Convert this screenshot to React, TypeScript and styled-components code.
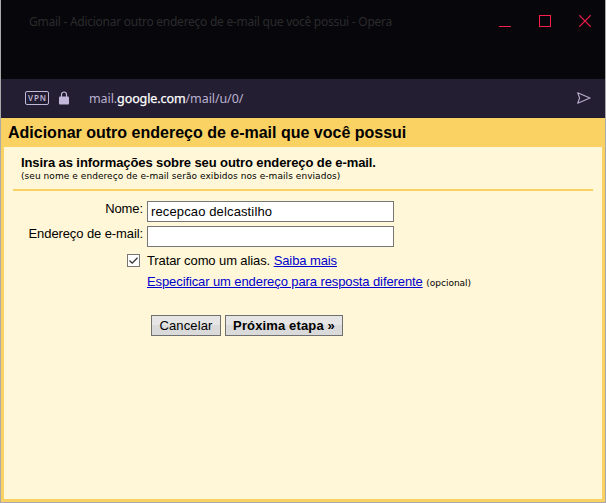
import React from 'react';
import styled, { createGlobalStyle } from 'styled-components';

const GlobalStyle = createGlobalStyle`
  * { box-sizing: border-box; }
  body { margin: 0; overflow: hidden; background: #a9a9a9; }
`;

const Window = styled.div`
  width: 606px;
  height: 503px;
  display: flex;
  flex-direction: column;
  border: solid #a9a9a9;
  border-width: 0 1px 1px;
  font-family: Arial, "Liberation Sans", sans-serif;
  color: #000;
  white-space: nowrap;
`;

const TitleBar = styled.header`
  height: 79px;
  flex: none;
  display: flex;
  justify-content: space-between;
  align-items: flex-start;
  padding: 14px 14px 0 28px;
  background: #07060b;
`;

const WindowTitle = styled.div`
  font: 12px/16px "Noto Sans", sans-serif;
  letter-spacing: -0.26px;
  color: #2b2b2b;
`;

const WindowControls = styled.div`
  display: flex;
  gap: 28px;
  padding-top: 1px;
`;

const AddressBar = styled.div`
  height: 39px;
  flex: none;
  display: flex;
  align-items: center;
  padding: 0 14px 0 24px;
  background: #241e32;
  border-bottom: 1px solid #1e192b;
`;

const VpnBadge = styled.span`
  width: 24px;
  height: 14px;
  border: 1px solid #c1b8da;
  border-radius: 2px;
  font: 8px/12px "Open Sans", sans-serif;
  font-weight: 600;
  letter-spacing: 1px;
  text-align: center;
  padding-left: 1px;
  color: #c1b8da;
`;

const LockIcon = styled.svg`
  margin: 0 20px 0 10px;
`;

const Address = styled.div`
  flex: 1;
  padding-top: 1px;
  font: 12.5px/16px "Noto Sans", sans-serif;
  letter-spacing: -0.09px;
  color: #b9b1cf;
`;

const Domain = styled.span`
  color: #fff;
  -webkit-text-stroke: 0.25px #fff;
`;

const Frame = styled.main`
  flex: 1;
  display: flex;
  flex-direction: column;
  padding: 0 3px 3px;
  background: #fad163;
`;

const PageTitle = styled.h1`
  height: 29px;
  margin: 0;
  padding-left: 4px;
  font-size: 16px;
  line-height: 30px;
`;

const Panel = styled.section`
  flex: 1;
  padding: 8px 9px 0;
  background: #fff7d7;
`;

const Intro = styled.div`
  height: 36px;
  padding-left: 8px;
  border-bottom: 2px solid #fad163;
`;

const IntroHeading = styled.h2`
  margin: 0;
  font-size: 13px;
  line-height: 15px;
  letter-spacing: -0.1px;
`;

const IntroNote = styled.div`
  font: 9px/12px Verdana, "DejaVu Sans", sans-serif;
  letter-spacing: 0.06px;
`;

const Form = styled.div`
  display: grid;
  grid-template-columns: 130px 1fr;
  column-gap: 4px;
  grid-template-rows: 21px 21px 17px 18px;
  row-gap: 4px;
  padding-top: 10px;
  font-size: 13px;
  letter-spacing: -0.1px;
`;

const Label = styled.label`
  text-align: right;
  line-height: 15px;
`;

const TextInput = styled.input`
  width: 247px;
  height: 21px;
  padding: 0 3px;
  border: 1px solid #767676;
  border-radius: 0;
  background: #fff;
  font: 13px "Liberation Sans", sans-serif;
  letter-spacing: 0.13px;
  outline: none;
`;

const CheckCell = styled.div`
  display: flex;
  justify-content: flex-end;
  padding: 3px 3px 0 0;
`;

const CheckBox = styled.span`
  width: 13px;
  height: 13px;
  border: 1px solid #767676;
  background: #fff;
  display: flex;
`;

const Line = styled.div`
  line-height: 15px;
  padding-top: 2px;
`;

const Link = styled.a`
  color: #0000cc;
  text-decoration: underline;
`;

const Optional = styled.span`
  font: 9px Verdana, "DejaVu Sans", sans-serif;
  letter-spacing: 0;
`;

const Actions = styled.div`
  display: flex;
  gap: 4px;
  padding: 25px 0 0 138px;
`;

const Button = styled.button<{ $width: number; $primary?: boolean }>`
  width: ${(p) => p.$width}px;
  height: 21px;
  padding: 0;
  border: 1px solid #707070;
  border-radius: 0;
  background: linear-gradient(#e5e5e5 50%, #dadada 50%);
  color: #000;
  font: ${(p) => (p.$primary ? 'bold' : 'normal')} 13px/19px "Liberation Sans", sans-serif;
  letter-spacing: 0.14px;
`;

export default function App() {
  return (
    <>
      <GlobalStyle />
      <Window>
        <TitleBar>
          <WindowTitle>Gmail - Adicionar outro endereço de e-mail que você possui - Opera</WindowTitle>
          <WindowControls>
            <svg width="12" height="12" shapeRendering="crispEdges"><path d="M0 11.5h12" stroke="#fa1e4e" /></svg>
            <svg width="12" height="12"><rect x=".5" y=".5" width="11" height="11" fill="none" stroke="#fa1e4e" /></svg>
            <svg width="12" height="12"><path d="M.3.3l11.4 11.4M11.7.3L.3 11.7" stroke="#fa1e4e" strokeWidth="1.2" /></svg>
          </WindowControls>
        </TitleBar>
        <AddressBar>
          <VpnBadge>VPN</VpnBadge>
          <LockIcon width="10" height="14" viewBox="0 0 10 14">
            <rect y="5.5" width="10" height="8" rx="1" fill="#c1b8da" />
            <path d="M2.5 6V3.5a2.5 2.5 0 0 1 5 0V6" fill="none" stroke="#c1b8da" strokeWidth="1.2" />
          </LockIcon>
          <Address>mail.<Domain>google.com</Domain>/mail/u/0/</Address>
          <svg width="14" height="12" viewBox="0 0 14 12">
            <path d="M.7.8L13 6 .7 11.2 2.6 6z" fill="none" stroke="#b6adcd" strokeWidth="1.1" strokeLinejoin="round" />
          </svg>
        </AddressBar>
        <Frame>
          <PageTitle>Adicionar outro endereço de e-mail que você possui</PageTitle>
          <Panel>
            <Intro>
              <IntroHeading>Insira as informações sobre seu outro endereço de e-mail.</IntroHeading>
              <IntroNote>(seu nome e endereço de e-mail serão exibidos nos e-mails enviados)</IntroNote>
            </Intro>
            <Form>
              <Label htmlFor="name">Nome:</Label>
              <TextInput id="name" defaultValue="recepcao delcastilho" />
              <Label htmlFor="email">Endereço de e-mail:</Label>
              <TextInput id="email" />
              <CheckCell>
                <CheckBox role="checkbox" aria-checked="true">
                  <svg width="11" height="11"><path d="M1.5 5.5l2.7 2.7 5.3-5.4" fill="none" stroke="#333" strokeWidth="1.3" /></svg>
                </CheckBox>
              </CheckCell>
              <Line>Tratar como um alias. <Link>Saiba mais</Link></Line>
              <span />
              <Line><Link>Especificar um endereço para resposta diferente</Link> <Optional>(opcional)</Optional></Line>
            </Form>
            <Actions>
              <Button $width={70}>Cancelar</Button>
              <Button $width={118} $primary>Próxima etapa »</Button>
            </Actions>
          </Panel>
        </Frame>
      </Window>
    </>
  );
}
